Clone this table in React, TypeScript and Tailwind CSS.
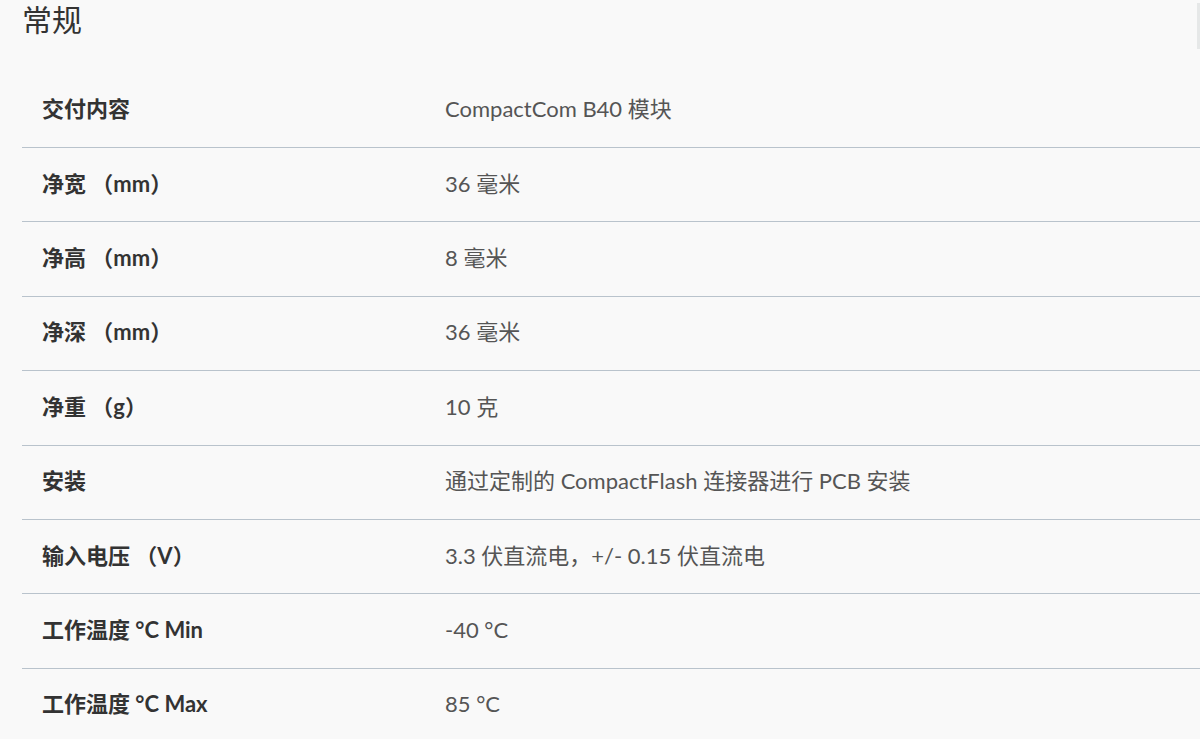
import React from "react";

const rows: [string, string][] = [
  ["交付内容", "CompactCom B40 模块"],
  ["净宽 （mm）", "36 毫米"],
  ["净高 （mm）", "8 毫米"],
  ["净深 （mm）", "36 毫米"],
  ["净重 （g）", "10 克"],
  ["安装", "通过定制的 CompactFlash 连接器进行 PCB 安装"],
  ["输入电压 （V）", "3.3 伏直流电，+/- 0.15 伏直流电"],
  ["工作温度 °C Min", "-40 °C"],
  ["工作温度 °C Max", "85 °C"],
];

export default function App() {
  return (
    <div
      className="relative min-h-screen w-full overflow-hidden bg-[#f9f9f9]"
      style={{ fontFamily: '"Lato", "Noto Sans CJK SC", sans-serif' }}
    >
      <div className="absolute right-0 top-[3px] h-[46px] w-[3px] bg-[#e6e8e8]" />
      <div className="pl-[22px]">
        <h2 className="h-[73.6px] pt-[1px] text-[30px] leading-[36px] font-normal text-[#333333]">
          常规
        </h2>
        <div className="flex flex-col">
          {rows.map(([k, v], i) => (
            <div
              key={i}
              className="flex h-[74.4px] items-center border-b border-[#b9c3cc] pb-[3px]"
            >
              <div className="w-[423px] shrink-0 pl-5 text-[22px] font-bold text-[#333333]">
                {k}
              </div>
              <div className="text-[22px] text-[#555555]">{v}</div>
            </div>
          ))}
        </div>
      </div>
    </div>
  );
}
